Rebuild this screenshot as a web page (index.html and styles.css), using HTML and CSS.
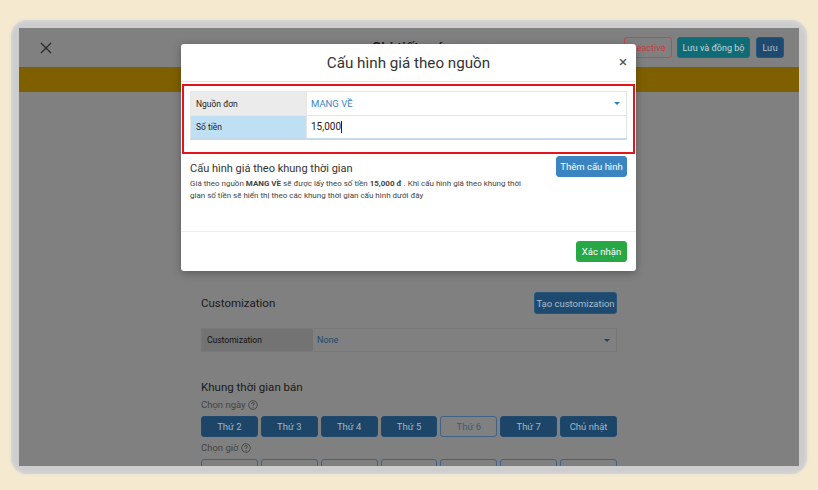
FILE: index.html
```html
<!DOCTYPE html>
<html lang="vi">

<head>
    <meta charset="UTF-8" />
    <meta name="viewport" content="width=device-width, initial-scale=1" />
    <title>Chi tiết món</title>
    <link rel="stylesheet" href="styles.css">
</head>

<body>
    <div class="frame">
        <!-- trang phía sau đang bị phủ mờ bởi modal -->
        <div class="screen dimmed">

            <header class="topbar">
                <div class="topbar-left">
                    <svg class="icon-close" width="12" height="12" viewBox="0 0 12 12">
                        <path d="M1 1 L11 11 M11 1 L1 11" stroke="#2b2b2b" stroke-width="1.4" fill="none" />
                    </svg>
                </div>
                <h1 class="page-title">Chi tiết món</h1>
                <div class="actions">
                    <button class="btn btn-outline-danger">Deactive</button>
                    <button class="btn btn-teal">Lưu và đồng bộ</button>
                    <button class="btn btn-navy">Lưu</button>
                </div>
            </header>

            <div class="notice"></div>

            <main class="content">
                <div class="section-head">
                    <h2 class="section-title">Customization</h2>
                    <button class="btn btn-navy">Tạo customization</button>
                </div>

                <div class="field-row">
                    <div class="field-label">Customization</div>
                    <div class="field-value">None <span class="caret"></span></div>
                </div>

                <h2 class="section-title sell-title">Khung thời gian bán</h2>
                <div class="hint">Chọn ngày
                    <svg width="10" height="10" viewBox="0 0 10 10">
                        <circle cx="5" cy="5" r="4.3" stroke="#444" fill="none" stroke-width="0.9" />
                        <path d="M3.6 3.9 Q3.6 2.6 5 2.6 Q6.4 2.6 6.4 3.8 Q6.4 4.6 5 5.1 L5 6" stroke="#444" fill="none" stroke-width="0.9" />
                        <circle cx="5" cy="7.3" r="0.55" fill="#444" />
                    </svg>
                </div>
                <div class="day-grid">
                    <button class="day active">Thứ 2</button>
                    <button class="day active">Thứ 3</button>
                    <button class="day active">Thứ 4</button>
                    <button class="day active">Thứ 5</button>
                    <button class="day">Thứ 6</button>
                    <button class="day active">Thứ 7</button>
                    <button class="day active">Chủ nhật</button>
                </div>
                <div class="hint">Chọn giờ
                    <svg width="10" height="10" viewBox="0 0 10 10">
                        <circle cx="5" cy="5" r="4.3" stroke="#444" fill="none" stroke-width="0.9" />
                        <path d="M3.6 3.9 Q3.6 2.6 5 2.6 Q6.4 2.6 6.4 3.8 Q6.4 4.6 5 5.1 L5 6" stroke="#444" fill="none" stroke-width="0.9" />
                        <circle cx="5" cy="7.3" r="0.55" fill="#444" />
                    </svg>
                </div>
                <div class="day-grid">
                    <button class="day"></button>
                    <button class="day"></button>
                    <button class="day"></button>
                    <button class="day"></button>
                    <button class="day"></button>
                    <button class="day"></button>
                    <button class="day"></button>
                </div>
            </main>

            <div class="modal">
                <div class="modal-header">
                    <h3 class="modal-title">Cấu hình giá theo nguồn</h3>
                    <span class="modal-close">×</span>
                </div>

                <div class="highlight">
                    <table class="price-table">
                        <tr>
                            <td class="cell-label">Nguồn đơn</td>
                            <td class="cell-value source">MANG VỀ <span class="caret"></span></td>
                        </tr>
                        <tr class="focused">
                            <td class="cell-label">Số tiền</td>
                            <td class="cell-value">15,000<span class="cursor"></span></td>
                        </tr>
                    </table>
                </div>

                <div class="modal-body">
                    <div class="time-config">
                        <div>
                            <h4 class="time-title">Cấu hình giá theo khung thời gian</h4>
                            <p class="time-desc">Giá theo nguồn <b>MANG VỀ</b> sẽ được lấy theo số tiền <b>15,000 đ</b> . Khi cấu hình giá theo khung thời gian số tiền sẽ hiển thị theo các khung thời gian cấu hình dưới đây</p>
                        </div>
                        <button class="btn btn-primary">Thêm cấu hình</button>
                    </div>
                </div>

                <div class="modal-footer">
                    <button class="btn btn-success">Xác nhận</button>
                </div>
            </div>

        </div>
    </div>
</body>

</html>
```

FILE: styles.css
```css
* {
    box-sizing: border-box;
    margin: 0;
    padding: 0;
}

body {
    font-family: Roboto, "Liberation Sans", sans-serif;
    background-color: #f5e9cf;
    color: #1a1a1a;
    padding: 20px 11px 16px 11px;
}

.frame {
    background: #cdcdcd;
    border-radius: 16px;
    padding: 8px;
    box-shadow: 0 0 3px #dcdcdc, inset 0 0 4px #e2e2e2;
}

/* màu của trang đã bị tối đi sau lớp phủ */
.screen {
    position: relative;
    height: 438px;
    overflow: hidden;
    background: #808080;
}

.topbar {
    display: grid;
    grid-template-columns: 1fr auto 1fr;
    align-items: center;
    height: 39px;
    padding: 0 15px 0 21px;
}

.icon-close {
    display: block;
}

.page-title {
    font-size: 15px;
    font-weight: 500;
    color: #1a1a1a;
}

.actions {
    display: flex;
    justify-content: flex-end;
    gap: 5px;
}

.btn {
    font-family: inherit;
    font-size: 9px;
    border: 1px solid transparent;
    border-radius: 3px;
    padding: 0 6px;
    height: 21px;
    color: #fff;
    white-space: nowrap;
    cursor: pointer;
}

.btn-outline-danger {
    background: transparent;
    border-color: #c9464b;
    color: #cc3b42;
    width: 48px;
    padding: 0;
}

.btn-teal {
    background: #0f6c77;
    border-color: #136f7a;
    color: #c7d8da;
    width: 73px;
    padding: 0;
}

.btn-navy {
    background: #1f4a70;
    border-color: #285678;
    color: #b4c2cf;
}

.actions .btn-navy {
    width: 28px;
    padding: 0;
    margin-left: 1px;
}

.btn-primary {
    background: #3a84c2;
    border-color: #3a84c2;
    font-size: 9.5px;
    padding: 0;
    width: 71px;
}

.btn-success {
    background: #28a745;
    border-color: #28a745;
    font-size: 9.5px;
    width: 51px;
    padding: 0;
}

.notice {
    height: 25px;
    background: #7f6000;
}

.content {
    width: 416px;
    margin: 200px auto 0;
}

.section-head {
    display: flex;
    justify-content: space-between;
    align-items: center;
}

.section-head .btn {
    height: 22px;
    width: 83px;
    padding: 0;
    font-size: 9.5px;
    color: #a9bccb;
}

.section-title {
    font-size: 11.5px;
    font-weight: 400;
    color: #1a1a1a;
}

.field-row {
    display: flex;
    height: 24px;
    margin-top: 14px;
    border: 1px solid #777;
    font-size: 8.5px;
}

.field-label {
    width: 111px;
    background: #737373;
    display: flex;
    align-items: center;
    padding-left: 5px;
    color: #111;
}

.field-value {
    flex: 1;
    display: flex;
    align-items: center;
    justify-content: space-between;
    padding: 0 6px 0 4px;
    color: #28466a;
    font-size: 9px;
}

.caret {
    width: 0;
    height: 0;
    border-left: 3.5px solid transparent;
    border-right: 3.5px solid transparent;
    border-top: 3.5px solid #2f7fc1;
}

.field-value .caret {
    border-top-color: #1c4466;
}

.sell-title {
    margin-top: 28px;
}

.hint {
    font-size: 9.5px;
    color: #444;
    margin-top: 5px;
    display: flex;
    align-items: center;
    gap: 2px;
}

.day-grid {
    display: grid;
    grid-template-columns: repeat(7, 1fr);
    gap: 3px;
    margin-top: 6px;
    margin-bottom: 5px;
}

.day {
    font-family: inherit;
    font-size: 9.5px;
    height: 21px;
    border: 1px solid #3f6286;
    border-radius: 3px;
    background: #808080;
    color: #3c5a78;
}

.day.active {
    background: #1c4567;
    border-color: #1f4a6e;
    color: #a5b5c4;
}

/* Modal */
.modal {
    position: absolute;
    left: 162px;
    top: 16px;
    width: 455px;
    background: #fff;
    color: #333;
    border-radius: 3px;
    box-shadow: 0 2px 8px rgba(0, 0, 0, 0.3);
}

.modal-header {
    position: relative;
    height: 38px;
    display: flex;
    align-items: center;
    justify-content: center;
    border-bottom: 1px solid #e5e5e5;
}

.modal-title {
    font-size: 15.2px;
    font-weight: 400;
    color: #333;
}

.modal-close {
    position: absolute;
    right: 9px;
    top: 9px;
    font-size: 15px;
    color: #555;
}

.highlight {
    margin: 2px 1px 0;
    border: 2px solid #e8121e;
    padding: 5px 6px 12px;
}

.price-table {
    width: 100%;
    border-collapse: collapse;
    font-size: 8.5px;
}

.price-table td {
    border: 1px solid #e6e6e6;
    height: 24px;
}

.price-table .cell-label {
    width: 116px;
    background: #ebebeb;
    padding-left: 5px;
    color: #222;
}

.price-table .cell-value {
    padding: 0 6px 0 4px;
}

.cell-value.source {
    color: #3a86c8;
    font-size: 9.5px;
}

.cell-value.source .caret {
    float: right;
    margin-top: 4px;
}

.focused .cell-label {
    background: #bfdff5;
}

.focused td {
    border-bottom: 2px solid #c6d9ea;
    height: 23px;
}

.focused .cell-value {
    font-size: 10px;
    color: #222;
}

.cursor {
    display: inline-block;
    width: 1px;
    height: 12px;
    background: #222;
    vertical-align: middle;
}

.modal-body {
    padding: 2px 9px 0;
    height: 78px;
    border-bottom: 1px solid #eee;
}

.time-config {
    display: flex;
    justify-content: space-between;
    align-items: flex-start;
}

.time-title {
    font-size: 11px;
    font-weight: 400;
    color: #333;
    margin-top: 6px;
}

.time-desc {
    font-size: 8px;
    line-height: 12px;
    color: #444;
    width: 345px;
    margin-top: 3px;
}

.modal-footer {
    display: flex;
    justify-content: flex-end;
    padding: 9px;
}
```
